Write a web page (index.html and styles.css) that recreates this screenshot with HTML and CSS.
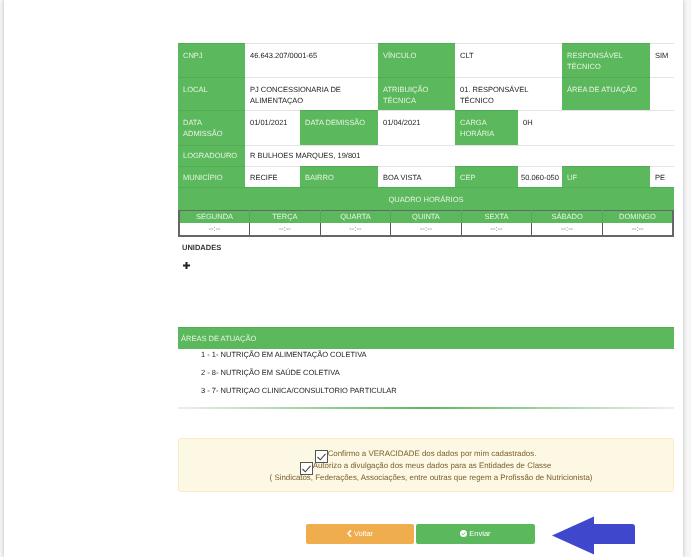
FILE: index.html
```html
<!DOCTYPE html>
<html lang="pt-BR">
<head>
<meta charset="utf-8">
<title>Confirmação de dados</title>
<link rel="stylesheet" href="styles.css">
</head>
<body>
<main class="page">
  <table class="info">
    <colgroup>
      <col class="c1"><col class="c2"><col class="c3"><col class="c4"><col class="c5"><col class="c6"><col class="c7"><col class="c8">
    </colgroup>
    <tr class="r1">
      <th>CNPJ</th><td colspan="2">46.643.207/0001-65</td><th>VÍNCULO</th><td colspan="2">CLT</td><th>RESPONSÁVEL TÉCNICO</th><td>SIM</td>
    </tr>
    <tr class="r2">
      <th>LOCAL</th><td colspan="2">PJ CONCESSIONARIA DE ALIMENTAÇAO</td><th>ATRIBUIÇÃO TÉCNICA</th><td colspan="2">01. RESPONSÁVEL TÉCNICO</td><th>ÁREA DE ATUAÇÃO</th><td></td>
    </tr>
    <tr class="r3">
      <th>DATA ADMISSÃO</th><td>01/01/2021</td><th>DATA DEMISSÃO</th><td>01/04/2021</td><th>CARGA HORÁRIA</th><td colspan="3">0H</td>
    </tr>
    <tr class="r4">
      <th>LOGRADOURO</th><td colspan="7">R BULHOES MARQUES, 19/801</td>
    </tr>
    <tr class="r5">
      <th>MUNICÍPIO</th><td>RECIFE</td><th>BAIRRO</th><td>BOA VISTA</td><th>CEP</th><td class="tight">50.060-050</td><th>UF</th><td>PE</td>
    </tr>
    <tr class="r6">
      <th colspan="8" class="center">QUADRO HORÁRIOS</th>
    </tr>
  </table>

  <table class="hours">
    <tr>
      <th>SEGUNDA</th><th>TERÇA</th><th>QUARTA</th><th>QUINTA</th><th>SEXTA</th><th>SÁBADO</th><th>DOMINGO</th>
    </tr>
    <tr>
      <td>--:--</td><td>--:--</td><td>--:--</td><td>--:--</td><td>--:--</td><td>--:--</td><td>--:--</td>
    </tr>
  </table>

  <h4 class="units-title">UNIDADES</h4>
  <svg class="plus" width="7" height="7" viewBox="0 0 7 7" aria-label="Adicionar"><path d="M2.500 0h2v2.500H7v2H4.500V7h-2V4.500H0v-2h2.500z"/></svg>

  <h3 class="areas-title">ÁREAS DE ATUAÇÃO</h3>
  <ul class="areas">
    <li>1 - 1- NUTRIÇÃO EM ALIMENTAÇÃO COLETIVA</li>
    <li>2 - 8- NUTRIÇÃO EM SAÚDE COLETIVA</li>
    <li>3 - 7- NUTRIÇAO CLINICA/CONSULTORIO PARTICULAR</li>
  </ul>
  <div class="divider"></div>

  <section class="alert">
    <p class="line"><svg class="check" width="13" height="13" viewBox="0 0 13 13"><rect x=".5" y=".5" width="12" height="12" fill="#fff" stroke="#555"/><path d="M2.500 7l2.800 2.800 5.200-6" fill="none" stroke="#444" stroke-width="1.100"/></svg>Confirmo a VERACIDADE dos dados por mim cadastrados.</p>
    <p class="line"><svg class="check" width="13" height="13" viewBox="0 0 13 13"><rect x=".5" y=".5" width="12" height="12" fill="#fff" stroke="#555"/><path d="M2.500 7l2.800 2.800 5.200-6" fill="none" stroke="#444" stroke-width="1.100"/></svg>Autorizo a divulgação dos meus dados para as Entidades de Classe</p>
    <p class="line last">( Sindicatos, Federações, Associações, entre outras que regem a Profissão de Nutricionista)</p>
  </section>

  <div class="actions">
    <button class="btn back" type="button"><svg width="5" height="7" viewBox="0 0 5 7"><path d="M4 .3L1 3.500 4 6.700" fill="none" stroke="#fff" stroke-width="1.600"/></svg>Voltar</button>
    <button class="btn send" type="button"><svg width="7" height="7" viewBox="0 0 7 7"><circle cx="3.500" cy="3.500" r="3.500" fill="#fff"/><path d="M1.700 3.500l1.300 1.300 2.300-2.400" fill="none" stroke="#5cb85c" stroke-width="1"/></svg>Enviar</button>
  </div>

  <svg class="arrow" width="84" height="39" viewBox="0 0 84 39"><path d="M0 19.500L42 0.500V8H80Q83 8 83 11V28H42V38.500z" fill="#3f48cc"/></svg>
</main>
</body>
</html>
```
FILE: styles.css
```css
* { box-sizing: border-box; }
html, body { margin: 0; height: 100%; }
body {
  background: #f6f6f6;
  font-family: "Liberation Sans", Arial, sans-serif;
  font-size: 7.500px;
  color: #333;
  overflow: hidden;
  text-rendering: geometricPrecision;
}
.page {
  position: relative;
  width: 679px;
  height: 557px;
  margin-left: 4px;
  padding: 43px 9px 0 174px;
  background: #fff;
  box-shadow: 0 0 4px rgba(0, 0, 0, .25);
  filter: blur(.35px);
}
table { border-collapse: collapse; table-layout: fixed; width: 496px; }
.c1 { width: 67px; } .c2 { width: 55px; } .c3 { width: 78px; } .c4 { width: 77px; }
.c5 { width: 63px; } .c6 { width: 44px; } .c7 { width: 88px; } .c8 { width: 24px; }
.info th, .info td {
  padding: 6px 5px 0;
  vertical-align: top;
  text-align: left;
  font-weight: 400;
  line-height: 11px;
  border-top: 1px solid #e4e4e4;
}
.info td { color: #222; }
.info th { background: #5cb85c; color: #e4f4e0; border-top-color: #55ab55; }
.r1 { height: 34px; } .r2 { height: 33px; } .r3 { height: 35px; }
.r4 { height: 21px; } .r5 { height: 21px; } .r6 { height: 22px; }
.info .r4 th, .info .r4 td { padding-top: 4px; }
.info .r5 th, .info .r5 td { padding-top: 5px; }
.info .tight { padding: 5px 0 0 3px; white-space: nowrap; }
.info .center { text-align: center; }
.hours { border: 2px solid #666; border-top-width: 1px; height: 27px; }
.hours th, .hours td { text-align: center; font-weight: 400; padding: 0; }
.hours th { background: #5cb85c; color: #e4f4e0; height: 13px; border-left: 1px solid #55ab55; line-height: 12px; }
.hours td { background: #fff; color: #666; height: 12px; border-left: 1px solid #555; line-height: 11px; }
.hours tr > :first-child { border-left: 0; }
.units-title { margin: 6px 0 0 4px; font-size: 7.500px; line-height: 10px; font-weight: 700; color: #333; }
.plus { display: block; margin: 9px 0 0 5px; fill: #222; }
.areas-title { margin: 58px 0 0; height: 22px; padding: 0 3px; background: #5cb85c; border-top: 1px solid #55ab55; color: #e4f4e0; font-size: 7.500px; line-height: 21px; font-weight: 400; }
.areas { list-style: none; margin: 0; padding: 0 0 0 23px; color: #222; }
.areas li { height: 18px; line-height: 11px; }
.divider { height: 2px; margin-top: 4px; background: linear-gradient(90deg, #eee, #5cb85c 50%, #eee); }
.alert { margin-top: 29px; height: 54px; padding: 9px 0 0; background: #fcf8e3; border: 1px solid #faebcc; border-radius: 3px; color: #7a5f30; text-align: center; font-size: 7.900px; }
.line { margin: 0; height: 12px; line-height: 12px; white-space: nowrap; }
.check { vertical-align: top; margin: 0 -1px -1px 0; position: relative; top: 2px; left: -1px; }
.last { padding-left: 10px; }
.actions { display: flex; gap: 2px; margin: 32px 0 0 128px; }
.btn { height: 20px; border: 0; border-radius: 2px; color: #fff; font: 7.500px "Liberation Sans", Arial, sans-serif; display: flex; align-items: center; justify-content: center; gap: 2px; padding: 0; }
.back { width: 108px; background: #f0ad4e; }
.send { width: 119px; background: #5cb85c; }
.arrow { position: absolute; left: 548px; top: 516px; }
```
